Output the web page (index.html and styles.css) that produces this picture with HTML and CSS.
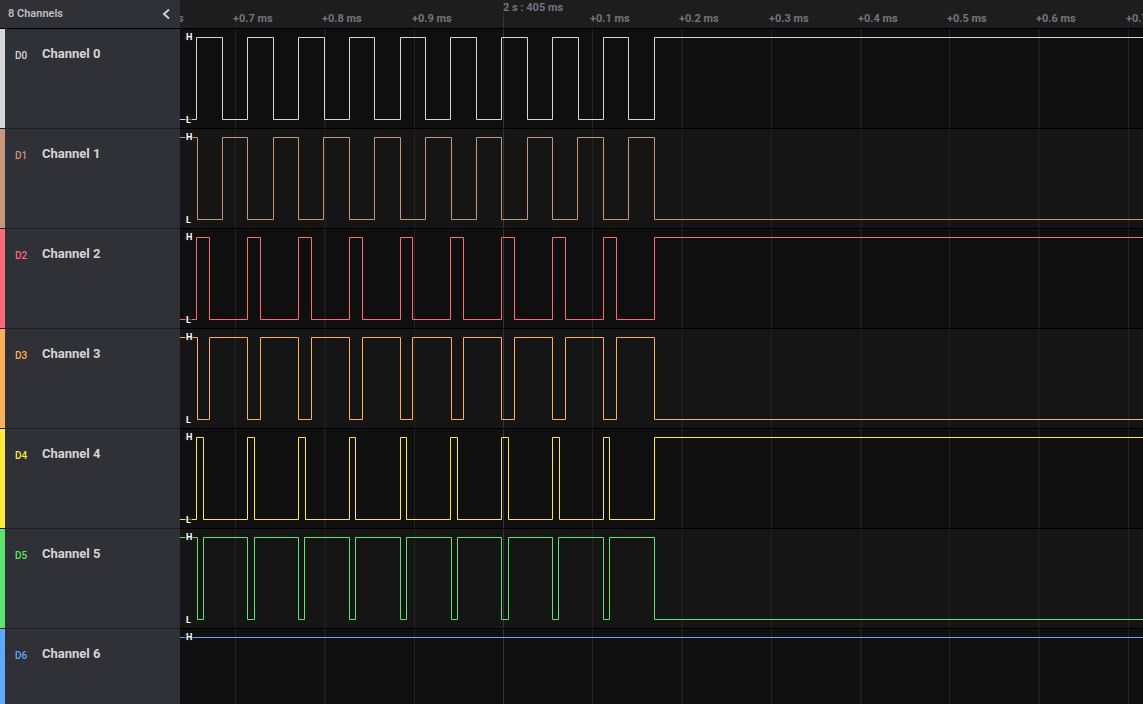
FILE: index.html
```
<!DOCTYPE html>
<html lang="en">
<head>
<meta charset="utf-8">
<title>Logic analyzer</title>
<link rel="stylesheet" href="styles.css">
</head>
<body>
<div class="app">
  <aside class="sidebar">
    <header class="sidebar-head">
      <span>8 Channels</span>
      <button class="collapse" type="button" aria-label="Collapse channels">
        <svg width="9" height="12" viewBox="0 0 9 12"><path d="M7 1.500 2 6l5 4.500"/></svg>
      </button>
    </header>
    <ul class="channels">
      <li class="channel c0"><span class="tag">D0</span><span class="name">Channel 0</span></li>
      <li class="channel c1"><span class="tag">D1</span><span class="name">Channel 1</span></li>
      <li class="channel c2"><span class="tag">D2</span><span class="name">Channel 2</span></li>
      <li class="channel c3"><span class="tag">D3</span><span class="name">Channel 3</span></li>
      <li class="channel c4"><span class="tag">D4</span><span class="name">Channel 4</span></li>
      <li class="channel c5"><span class="tag">D5</span><span class="name">Channel 5</span></li>
      <li class="channel c6"><span class="tag">D6</span><span class="name">Channel 6</span></li>
    </ul>
  </aside>
  <main class="timeline">
    <div class="ruler"></div>
    <svg class="ticks">
      <g class="minor">
        <path d="M55.500 24V9999M234.500 24V9999M412.500 24V9999M591.500 24V9999M769.500 24V9999M948.500 24V9999"/>
        <path class="wide" d="M145 24V9999M502 24V9999M681 24V9999M859 24V9999"/>
      </g>
      <path class="major" d="M323.500 13V9999"/>
      <g class="labels">
        <text x="-36" y="22">+0.6 ms</text>
        <text x="53" y="22">+0.7 ms</text>
        <text x="142" y="22">+0.8 ms</text>
        <text x="232" y="22">+0.9 ms</text>
        <text x="323" y="11">2 s : 405 ms</text>
        <text x="410" y="22">+0.1 ms</text>
        <text x="499" y="22">+0.2 ms</text>
        <text x="589" y="22">+0.3 ms</text>
        <text x="678" y="22">+0.4 ms</text>
        <text x="767" y="22">+0.5 ms</text>
        <text x="856" y="22">+0.6 ms</text>
        <text x="946" y="22">+0.7 ms</text>
      </g>
    </svg>
    <div class="lane c0"><svg class="trace">
      <path transform="translate(.5 .5)" d="M-1 90H16V8H42V90H67V8H93V90H118V8H144V90H169V8H194V90H220V8H245V90H270V8H296V90H321V8H347V90H372V8H398V90H423V8H448V90H474V8H9999"/>
      <rect x="5" y="2" width="8" height="12" rx="2"/><rect x="5" y="84" width="7" height="12" rx="2"/><text x="6" y="11">H</text><text x="6" y="94">L</text>
    </svg></div>
    <div class="lane c1"><svg class="trace">
      <path transform="translate(.5 .5)" d="M-1 8H17V90H42V8H67V90H93V8H118V90H143V8H169V90H194V8H220V90H245V8H271V90H296V8H321V90H347V8H372V90H397V8H423V90H448V8H474V90H9999"/>
      <rect x="5" y="2" width="8" height="12" rx="2"/><rect x="5" y="84" width="7" height="12" rx="2"/><text x="6" y="11">H</text><text x="6" y="94">L</text>
    </svg></div>
    <div class="lane c2"><svg class="trace">
      <path transform="translate(.5 .5)" d="M-1 90H16V8H29V90H67V8H80V90H118V8H131V90H169V8H182V90H220V8H232V90H270V8H283V90H321V8H334V90H372V8H385V90H423V8H436V90H474V8H9999"/>
      <rect x="5" y="2" width="8" height="12" rx="2"/><rect x="5" y="84" width="7" height="12" rx="2"/><text x="6" y="11">H</text><text x="6" y="94">L</text>
    </svg></div>
    <div class="lane c3"><svg class="trace">
      <path transform="translate(.5 .5)" d="M-1 8H17V90H29V8H67V90H80V8H118V90H131V8H169V90H182V8H220V90H232V8H271V90H283V8H321V90H334V8H372V90H385V8H423V90H436V8H474V90H9999"/>
      <rect x="5" y="2" width="8" height="12" rx="2"/><rect x="5" y="84" width="7" height="12" rx="2"/><text x="6" y="11">H</text><text x="6" y="94">L</text>
    </svg></div>
    <div class="lane c4"><svg class="trace">
      <path transform="translate(.5 .5)" d="M-1 90H16V8H23V90H67V8H74V90H118V8H125V90H169V8H175V90H220V8H226V90H270V8H277V90H321V8H328V90H372V8H379V90H423V8H429V90H474V8H9999"/>
      <rect x="5" y="2" width="8" height="12" rx="2"/><rect x="5" y="84" width="7" height="12" rx="2"/><text x="6" y="11">H</text><text x="6" y="94">L</text>
    </svg></div>
    <div class="lane c5"><svg class="trace">
      <path transform="translate(.5 .5)" d="M-1 8H17V90H23V8H67V90H74V8H118V90H124V8H169V90H175V8H220V90H226V8H271V90H277V8H321V90H328V8H372V90H378V8H423V90H429V8H474V90H9999"/>
      <rect x="5" y="2" width="8" height="12" rx="2"/><rect x="5" y="84" width="7" height="12" rx="2"/><text x="6" y="11">H</text><text x="6" y="94">L</text>
    </svg></div>
    <div class="lane c6"><svg class="trace">
      <path transform="translate(.5 .5)" d="M-1 8H9999"/>
      <rect x="5" y="2" width="8" height="12" rx="2"/><text x="6" y="11">H</text>
    </svg></div>
  </main>
</div>
</body>
</html>
```
FILE: styles.css
```
* { box-sizing: border-box; }

body {
  margin: 0;
  background: #0f0f0f;
  color: #d4d4d6;
  font-family: Roboto, "Liberation Sans", sans-serif;
}

.app {
  display: flex;
  height: 100vh;
  overflow: hidden;
}

.c0 { --wire: #d6d6d6; }
.c1 { --wire: #c8967a; }
.c2 { --wire: #ff6978; }
.c3 { --wire: #ffaf5a; }
.c4 { --wire: #ffeb3c; }
.c5 { --wire: #5ae66e; }
.c6 { --wire: #5aaaff; }

/* Channel list */
.sidebar {
  flex: 0 0 180px;
  overflow: hidden;
  background: #303136;
}

.sidebar-head {
  display: flex;
  align-items: center;
  justify-content: space-between;
  height: 28px;
  padding: 0 9px 1px 8px;
  color: #bebec2;
  font-size: 11px;
  font-weight: 600;
}

.collapse {
  display: flex;
  padding: 0;
  border: 0;
  background: none;
}

.collapse path {
  fill: none;
  stroke: #d0d0d2;
  stroke-width: 2;
}

.channels {
  margin: 0;
  padding: 0;
  list-style: none;
}

.channel {
  display: flex;
  align-items: flex-start;
  height: 100px;
  padding: 17px 10px;
  border-top: 1px solid #1e1e21;
  background: linear-gradient(var(--wire), var(--wire)) left / 5px 100% no-repeat;
}

.channel:first-child { border-top-color: #000; }

.tag {
  width: 32px;
  padding-left: 5px;
  color: var(--wire);
  font-size: 10px;
  font-weight: 500;
  line-height: 20px;
}

.name {
  font-size: 13px;
  font-weight: 700;
  line-height: 16px;
}

/* Waveform area */
.timeline {
  position: relative;
  flex: 1;
  min-width: 0;
  overflow: hidden;
}

.ruler {
  height: 28px;
  background: #1d1d1d;
}

.ticks {
  position: absolute;
  inset: 0;
  width: 100%;
  height: 100%;
}

.minor { stroke: #222; }
.minor .wide { stroke: #1c1c1c; stroke-width: 2; }
.major { stroke: #343434; }

.labels {
  fill: #74747c;
  font-size: 11px;
  font-weight: 700;
}

.lane {
  height: 100px;
  background: #0f0f0f;
}

.lane:nth-of-type(odd) { background: #151515; }

.trace {
  position: relative;
  display: block;
  width: 100%;
  height: 100px;
  border-top: 1px solid #000;
}

.trace path {
  fill: none;
  stroke: var(--wire);
}

.trace rect { fill: rgba(24, 24, 24, 0.6); }

.trace text {
  fill: #fff;
  font-size: 9px;
  font-weight: 700;
}
```
